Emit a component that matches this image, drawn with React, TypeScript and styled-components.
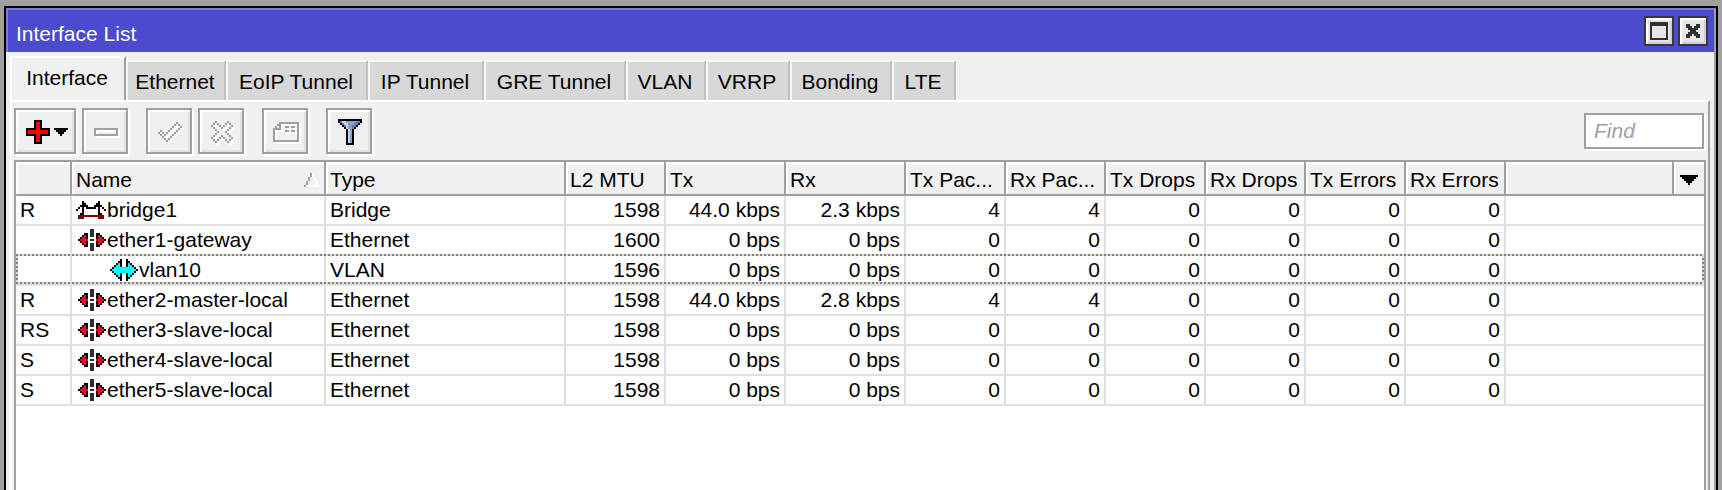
import React from "react";
import styled, { createGlobalStyle, css } from "styled-components";

const edge = "#a0a0a0";
const face = "#f0f0f0";
const gridLine = "#e0e0e0";

const GlobalStyle = createGlobalStyle`
  * { box-sizing: border-box; }
  html, body, #root { height: 100%; }
  body {
    margin: 0;
    background: ${edge};
    color: #000;
    font: 21px/28px "Liberation Sans", Arial, sans-serif;
    overflow: hidden;
  }
  button, input { font: inherit; color: inherit; }
`;

const Desktop = styled.div`
  display: flex;
  min-height: 100%;
  padding: 6px 4px 0;
`;

const Window = styled.main`
  flex: 1;
  display: flex;
  flex-direction: column;
  border: 2px solid #000;
  border-bottom: 0;
  background: ${face};
`;

const TitleBar = styled.header`
  display: flex;
  align-items: center;
  gap: 4px;
  height: 44px;
  padding: 0 6px 0 8px;
  border: solid #7d7be0;
  border-width: 2px 2px 0 2px;
  border-right-color: ${edge};
  background: #4c4ace;
  color: #fff;
`;

const Title = styled.h1`
  flex: 1;
  margin: 0;
  padding-top: 6px;
  font: inherit;
`;

const WindowButton = styled.button`
  display: grid;
  place-items: center;
  width: 30px;
  height: 30px;
  padding: 0;
  border: 2px solid #383838;
  background: #e8e4e8;
  box-shadow: inset 2px 2px #fff, inset -2px -2px #d0d0d0;
`;

const Body = styled.div`
  flex: 1;
  display: flex;
  flex-direction: column;
  padding: 4px 4px 0;
  border-right: 2px solid ${edge};
`;

const Tabs = styled.nav`
  display: flex;
  align-items: flex-end;
  height: 44px;
`;

const Tab = styled.button<{ $width: number; $active?: boolean }>`
  width: ${(p) => p.$width}px;
  height: 40px;
  padding: 2px 2px 0 0;
  border: solid #f8f8f8;
  border-width: 2px 2px 0 2px;
  border-right-color: #c0c0c0;
  background: #d8d8d8;
  white-space: nowrap;
  ${(p) =>
    p.$active &&
    css`
      height: 44px;
      padding: 0 2px 2px 0;
      border-color: #fff ${edge} ${face} #fff;
      background: ${face};
    `}
`;

const Panel = styled.section`
  flex: 1;
  display: flex;
  flex-direction: column;
  padding: 0 2px;
  border: solid #fff;
  border-width: 2px 2px 0;
  border-right-color: ${edge};
`;

const Toolbar = styled.div`
  display: flex;
  align-items: center;
  gap: 18px;
  height: 58px;
  padding-right: 2px;
`;

const ToolGroup = styled.div`
  display: flex;
  gap: 6px;
`;

const ToolButton = styled.button<{ $wide?: boolean }>`
  display: flex;
  align-items: center;
  justify-content: center;
  gap: 4px;
  width: ${(p) => (p.$wide ? 62 : 46)}px;
  height: 46px;
  padding: 2px 0 0 ${(p) => (p.$wide ? 4 : 2)}px;
  border: 2px solid ${edge};
  background: ${face};
  box-shadow: 2px 2px #fff, inset 2px 2px #fff, inset -2px -2px #e2e2e2;
`;

const FindBox = styled.input`
  width: 120px;
  height: 36px;
  margin-left: auto;
  padding: 0 8px;
  border: 2px solid ${edge};
  border-radius: 0;
  background: #fff;
  box-shadow: 2px 2px #fff;
  outline: 0;
  &::placeholder { color: ${edge}; font-style: italic; opacity: 1; }
`;

const ListFrame = styled.div`
  flex: 1;
  border: 2px solid ${edge};
  border-bottom: 0;
  background: #fff;
`;

const Table = styled.table`
  width: 100%;
  table-layout: fixed;
  border-collapse: separate;
  border-spacing: 0;
`;

const Column = styled.col<{ $width?: number }>`
  width: ${(p) => (p.$width ? `${p.$width}px` : "auto")};
`;

const HeadCell = styled.th<{ $last?: boolean }>`
  height: 34px;
  padding: 4px 0 0 4px;
  border: 0 solid ${edge};
  border-width: 0 ${(p) => (p.$last ? 0 : 2)}px 2px 0;
  background: ${face};
  box-shadow: inset 2px 2px #fff;
  font-weight: normal;
  text-align: left;
  white-space: nowrap;
`;

const HeadContent = styled.div`
  display: flex;
  align-items: center;
  justify-content: space-between;
  padding-right: 4px;
`;

const MenuButton = styled.button`
  display: grid;
  place-items: center;
  width: 22px;
  height: 28px;
  padding: 0;
  border: 0;
  background: none;
`;

const Row = styled.tr`
  position: relative;
`;

/* The focus outline hangs on the last cell but is sized by the whole row. */
const Cell = styled.td<{ $numeric?: boolean; $last?: boolean; $outline?: boolean }>`
  height: 30px;
  padding: 0 4px;
  border: 0 solid ${gridLine};
  border-width: 0 ${(p) => (p.$last ? 0 : 2)}px 2px 0;
  text-align: ${(p) => (p.$numeric ? "right" : "left")};
  white-space: nowrap;
  ${(p) =>
    p.$outline &&
    css`
      &::after {
        content: "";
        position: absolute;
        inset: -2px 0 2px;
        pointer-events: none;
        --across: repeating-linear-gradient(90deg, #808078 0 2px, #dcdcd4 2px 4px);
        --down: repeating-linear-gradient(#808078 0 2px, #dcdcd4 2px 4px);
        background: var(--across) top / 100% 2px no-repeat,
          var(--across) bottom / 100% 2px no-repeat,
          var(--down) left / 2px 100% no-repeat,
          var(--down) right / 2px 100% no-repeat;
      }
    `}
`;

const NameContent = styled.div<{ $nested?: boolean }>`
  display: flex;
  align-items: center;
  height: 28px;
  padding-left: ${(p) => (p.$nested ? 32 : 0)}px;
`;

const IconSlot = styled.span`
  display: flex;
  justify-content: flex-end;
  width: 30px;
  margin-right: 1px;
`;

const palette: Record<string, string> = {
  K: "#000000",
  B: "#303030",
  R: "#ff0000",
  E: "#e81020",
  D: "#800000",
  C: "#00ffff",
  G: "#a0a0a0",
  W: "#ffffff",
  L: "#c8d0e8",
  M: "#8c9cc8",
  N: "#6878a8",
};

/* Each character of the bitmap is one 2px square; dots are transparent. */
function PixelIcon({ map, shadow }: { map: string[]; shadow?: boolean }) {
  const w = Math.max(...map.map((r) => r.length));
  const draw = (dx: number, color?: string) =>
    map.flatMap((row, y) =>
      [...row].map((c, x) =>
        c === "." ? null : (
          <rect key={`${dx}-${x}-${y}`} x={x + dx} y={y + dx} width="1" height="1" fill={color || palette[c]} />
        ),
      ),
    );
  return (
    <svg
      width={w * 2}
      height={map.length * 2}
      viewBox={`0 0 ${w} ${map.length}`}
      shapeRendering="crispEdges"
      overflow="visible"
      aria-hidden="true"
    >
      {shadow && draw(1, "#ffffff")}
      {draw(0)}
    </svg>
  );
}

const icons = {
  add: [
    "....KKKK....", "....KRRK....", "....KRRK....", "....KRRK....",
    "KKKKKRRKKKKK", "KRRRRRRRRRRK", "KRRRRRRRRRRK", "KKKKKRRKKKKK",
    "....KRRK....", "....KRRK....", "....KRRK....", "....KKKK....",
  ],
  caret: ["KKKKKKK", ".KKKKK.", "..KKK..", "...K..."],
  bigCaret: ["KKKKKKKKK", ".KKKKKKK.", "..KKKKK..", "...KKK...", "....K...."],
  remove: ["GGGGGGGGGGGG", "G..........G", "G..........G", "GGGGGGGGGGGG"],
  enable: [
    ".........G..", "........G.G.", ".......G...G", "......G...G.", ".G...G...G..",
    "G.G.G...G...", ".G.G...G....", "..G...G.....", "...G.G......", "....G.......",
  ],
  disable: [
    "..G.....G..", ".G.G...G.G.", "G...G.G...G", ".G...G...G.", "..G.....G..", "...G...G...",
    "..G.....G..", ".G...G...G.", "G...G.G...G", ".G.G...G.G.", "..G.....G..",
  ],
  comment: [
    "...GGGGGGGGGG", "..GG........G", ".G.G..GG.GG.G", "GGGG........G", "G.....GG.GG.G",
    "G...........G", "G...........G", "G...........G", "G...........G", "GGGGGGGGGGGGG",
  ],
  filter: [
    "KKKKKKKKKKKK", "KNLLMMMMMNNK", ".KNLLMMMNNK.", "..KNLMMNNK..", "...KLMMNK...",
    "....KLMK....", "....KLMK....", "....KLMK....", "....KLMK....", "....KLMK....",
    "....KLMK....", "....KLMK....", "....KKKK....",
  ],
  maximize: [
    "BBBBBBBBB", "BBBBBBBBB", "B.......B", "B.......B", "B.......B",
    "B.......B", "B.......B", "B.......B", "BBBBBBBBB",
  ],
  close: ["BB...BB", "BBB.BBB", ".BBBBB.", "..BBB..", ".BBBBB.", "BBB.BBB", "BB...BB"],
  sort: ["...GW...", "...GW...", "..G..W..", "..G..W..", ".G....W.", ".G....W.", "GWWWWWWW"],
  bridge: [
    "...K.......K...", "...KK.....KK...", "..KKKK...KKKK..", ".K.K.KKKKK.K.K.", "K..K.......K..K",
    "...K.......K...", "..KK.......KK..", ".DDDDDDDDDDDDD.", ".DDD.......DDD.",
  ],
  ethernet: [
    "......BB......", "......BB......", "...KK.BB.KK...", "..KEK.BB.KEK..", ".KEEK....KEEK.",
    "KEEEE.BB.EEEEK", ".KEEK....KEEK.", "..KEK.BB.KEK..", "...KK.BB.KK...", "......BB......", "......BB......",
  ],
  vlan: [
    ".....K..K.....", "....KK..KK....", "...KCK..KCK...", "..KCCK..KCCK..", ".KCCCCCCCCCCK.",
    "KCCCCCCCCCCCCK", ".KCCCCCCCCCCK.", "..KCCK..KCCK..", "...KCK..KCK...", "....KK..KK....", ".....K..K.....",
  ],
};

const tabs: [string, number][] = [
  ["Interface", 116], ["Ethernet", 100], ["EoIP Tunnel", 142], ["IP Tunnel", 116], ["GRE Tunnel", 142],
  ["VLAN", 80], ["VRRP", 84], ["Bonding", 102], ["LTE", 64],
];

const columns: [string, number?][] = [
  ["", 56], ["Name", 254], ["Type", 240], ["L2 MTU", 100], ["Tx", 120], ["Rx", 120],
  ["Tx Pac...", 100], ["Rx Pac...", 100], ["Tx Drops", 100], ["Rx Drops", 100],
  ["Tx Errors", 100], ["Rx Errors", 100], [""],
];

type Kind = "bridge" | "ethernet" | "vlan";
const labels: Record<Kind, string> = { bridge: "Bridge", ethernet: "Ethernet", vlan: "VLAN" };

const rows: { flags: string; name: string; kind: Kind; mtu: number; tx: string; rx: string; packets: number }[] = [
  { flags: "R", name: "bridge1", kind: "bridge", mtu: 1598, tx: "44.0 kbps", rx: "2.3 kbps", packets: 4 },
  { flags: "", name: "ether1-gateway", kind: "ethernet", mtu: 1600, tx: "0 bps", rx: "0 bps", packets: 0 },
  { flags: "", name: "vlan10", kind: "vlan", mtu: 1596, tx: "0 bps", rx: "0 bps", packets: 0 },
  { flags: "R", name: "ether2-master-local", kind: "ethernet", mtu: 1598, tx: "44.0 kbps", rx: "2.8 kbps", packets: 4 },
  { flags: "RS", name: "ether3-slave-local", kind: "ethernet", mtu: 1598, tx: "0 bps", rx: "0 bps", packets: 0 },
  { flags: "S", name: "ether4-slave-local", kind: "ethernet", mtu: 1598, tx: "0 bps", rx: "0 bps", packets: 0 },
  { flags: "S", name: "ether5-slave-local", kind: "ethernet", mtu: 1598, tx: "0 bps", rx: "0 bps", packets: 0 },
];

export default function App() {
  return (
    <Desktop>
      <GlobalStyle />
      <Window>
        <TitleBar>
          <Title>Interface List</Title>
          <WindowButton aria-label="Maximize"><PixelIcon map={icons.maximize} /></WindowButton>
          <WindowButton aria-label="Close"><PixelIcon map={icons.close} /></WindowButton>
        </TitleBar>
        <Body>
          <Tabs>
            {tabs.map(([name, width], i) => (
              <Tab key={name} $width={width} $active={i === 0}>{name}</Tab>
            ))}
          </Tabs>
          <Panel>
            <Toolbar>
              <ToolGroup>
                <ToolButton $wide aria-label="Add">
                  <PixelIcon map={icons.add} />
                  <PixelIcon map={icons.caret} />
                </ToolButton>
                <ToolButton aria-label="Remove" disabled><PixelIcon map={icons.remove} shadow /></ToolButton>
              </ToolGroup>
              <ToolGroup>
                <ToolButton aria-label="Enable" disabled><PixelIcon map={icons.enable} shadow /></ToolButton>
                <ToolButton aria-label="Disable" disabled><PixelIcon map={icons.disable} shadow /></ToolButton>
              </ToolGroup>
              <ToolButton aria-label="Comment" disabled><PixelIcon map={icons.comment} shadow /></ToolButton>
              <ToolButton aria-label="Filter"><PixelIcon map={icons.filter} /></ToolButton>
              <FindBox placeholder="Find" aria-label="Find" />
            </Toolbar>
            <ListFrame>
              <Table>
                <colgroup>
                  {columns.map(([, width], i) => <Column key={i} $width={width} />)}
                  <Column $width={30} />
                </colgroup>
                <thead>
                  <tr>
                    {columns.map(([name], i) => (
                      <HeadCell key={i} scope="col">
                        {name === "Name" ? (
                          <HeadContent>{name}<PixelIcon map={icons.sort} /></HeadContent>
                        ) : name}
                      </HeadCell>
                    ))}
                    <HeadCell $last>
                      <MenuButton aria-label="Choose columns"><PixelIcon map={icons.bigCaret} /></MenuButton>
                    </HeadCell>
                  </tr>
                </thead>
                <tbody>
                  {rows.map((r) => (
                    <Row key={r.name}>
                      <Cell>{r.flags}</Cell>
                      <Cell>
                        <NameContent $nested={r.kind === "vlan"}>
                          <IconSlot><PixelIcon map={icons[r.kind]} /></IconSlot>
                          {r.name}
                        </NameContent>
                      </Cell>
                      <Cell>{labels[r.kind]}</Cell>
                      {[r.mtu, r.tx, r.rx, r.packets, r.packets, 0, 0, 0, 0].map((v, i) => (
                        <Cell key={i} $numeric>{v}</Cell>
                      ))}
                      <Cell $last colSpan={2} $outline={r.kind === "vlan"} />
                    </Row>
                  ))}
                </tbody>
              </Table>
            </ListFrame>
          </Panel>
        </Body>
      </Window>
    </Desktop>
  );
}
